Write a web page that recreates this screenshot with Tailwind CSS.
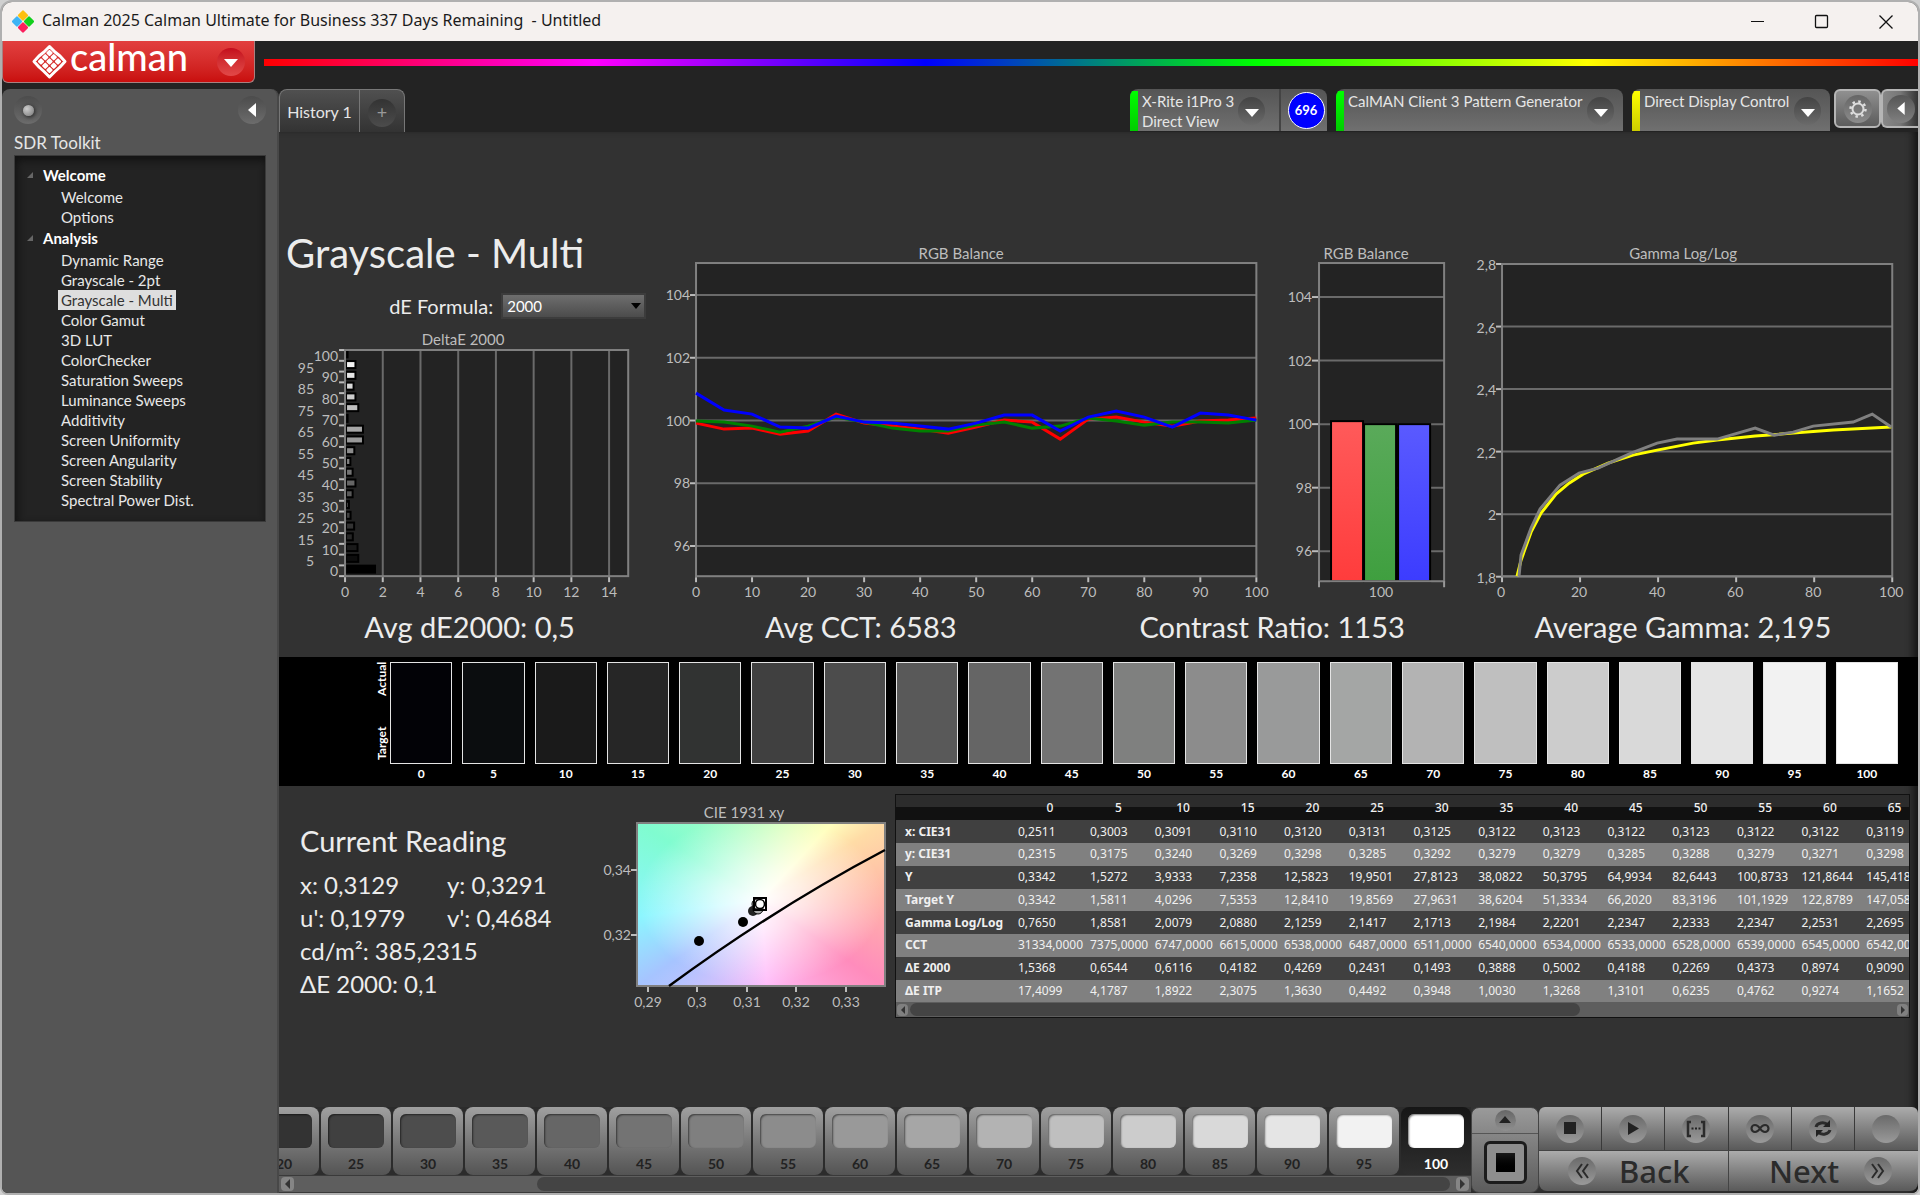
<!DOCTYPE html>
<html lang="en">

<head>
    <meta charset="UTF-8">
    <meta name="viewport" content="width=device-width, initial-scale=1.0">
    <title>Calman 2025 Calman Ultimate for Business</title>
    <script src="https://cdn.jsdelivr.net/npm/@tailwindcss/browser@4"></script>
</head>

<body class="bg-[#d0d0d0] font-['Lato',sans-serif]">
    <div class="h-screen flex flex-col overflow-hidden rounded-t-xl rounded-b-lg border-2 border-[#b0b0b0] bg-[#232323]">

        <!-- title bar -->
        <header class="h-[39px] shrink-0 flex items-center bg-[#f5f1ef] pl-[9px] text-[#1b1b1b] font-['Noto_Sans',sans-serif]">
            <svg class="w-[24px] h-[24px]" viewBox="0 0 24 24">
                <rect x="8" y="1.500" width="8" height="8" rx="1.500" transform="rotate(45 12 5.500)" fill="#fdc010" />
                <rect x="2" y="7.500" width="8" height="8" rx="1.500" transform="rotate(45 6 11.500)" fill="#3fb4f5" />
                <rect x="14" y="7.500" width="8" height="8" rx="1.500" transform="rotate(45 18 11.500)" fill="#12cf1c" />
                <rect x="8" y="13.500" width="8" height="8" rx="1.500" transform="rotate(45 12 17.500)" fill="#fb1f5d" />
            </svg>
            <h2 class="ml-[7px] text-[16px] leading-[36px] h-full whitespace-pre">Calman 2025 Calman Ultimate for Business 337 Days Remaining  - Untitled</h2>
            <div class="ml-auto h-full flex text-[#111]">
                <button class="w-[64px] grid place-items-center" aria-label="Minimize"><svg class="w-4 h-4" viewBox="0 0 16 16"><path d="M1 7.500h13" stroke="currentColor" /></svg></button>
                <button class="w-[64px] grid place-items-center" aria-label="Maximize"><svg class="w-4 h-4" viewBox="0 0 16 16"><rect x="1.500" y="1.500" width="12" height="12" rx="1" fill="none" stroke="currentColor" stroke-width="1.300" /></svg></button>
                <button class="w-[64px] grid place-items-center" aria-label="Close"><svg class="w-4 h-4" viewBox="0 0 16 16"><path d="M1.500 1.500l13 13M14.500 1.500l-13 13" stroke="currentColor" stroke-width="1.300" /></svg></button>
            </div>
        </header>

        <!-- logo and rainbow strip -->
        <div class="h-[48px] shrink-0 flex items-start">
            <button class="w-[253px] h-[42px] flex items-center rounded-b-md border border-t-0 border-[#a98080] bg-linear-to-b from-[#e23f3f] to-[#c90d0d] text-white" aria-label="Calman menu">
                <svg class="w-[214px] h-[42px] overflow-visible" viewBox="0 0 214 42">
                    <path d="M41 11l5.500-5.500 5.500 5.500M57 15l5 5.500-5 5.500M52 30.500l-5.500 5.500-5.500-5.500M36 26l-5-5.500 5-5.500M41 11l-5 4M52 11l5 4M57 26l-5 4.500M36 26l5 4.500" fill="none" stroke="#fff" stroke-width="3" stroke-linejoin="round" stroke-linecap="round" />
                    <g fill="#fff" transform="rotate(45 46.500 20.500)">
                        <rect x="38" y="12" width="5" height="5" rx="1" />
                        <rect x="44" y="12" width="5" height="5" rx="1" />
                        <rect x="50" y="12" width="5" height="5" rx="1" />
                        <rect x="38" y="18" width="5" height="5" rx="1" />
                        <rect x="44" y="18" width="5" height="5" rx="1" />
                        <rect x="50" y="18" width="5" height="5" rx="1" />
                        <rect x="38" y="24" width="5" height="5" rx="1" />
                        <rect x="44" y="24" width="5" height="5" rx="1" />
                        <rect x="50" y="24" width="5" height="5" rx="1" />
                    </g>
                    <text x="67" y="30" fill="#fff" font-size="38" font-weight="500">calman</text>
                </svg>
                <span class="w-[28px] h-[28px] rounded-full grid place-items-center bg-linear-to-b from-[#c40a1c] to-[#e24848]">
                    <svg class="w-[14px] h-[8px] mt-[3px]" viewBox="0 0 14 8"><path d="M0 0h14L7 8z" fill="#fff" /></svg>
                </span>
            </button>
            <div class="flex-1 ml-[9px] mt-[18px] h-[7px] bg-[linear-gradient(to_right,#f00_0%,#f0f_20%,#00f_40%,#0f0_60%,#ff0_80%,#f00_100%)]"></div>
        </div>

        <div class="flex-1 min-h-0 flex">

            <!-- sidebar -->
            <aside class="w-[277px] shrink-0 rounded-t-lg bg-[#555] border-r-2 border-[#484848] pl-[12px] pr-[11px]">
                <div class="h-[42px] flex items-center justify-between">
                    <button class="w-[28px] h-[28px] rounded-full grid place-items-center bg-linear-to-b from-[#4c4c4c] to-[#6c6c6c]" aria-label="Pin">
                        <span class="w-[11px] h-[11px] rounded-full bg-radial-[at_35%_35%] from-[#ccc] to-[#777] shadow-[1px_1px_4px_#222]"></span>
                    </button>
                    <button class="w-[28px] h-[28px] rounded-full grid place-items-center bg-linear-to-b from-[#4c4c4c] to-[#6c6c6c]" aria-label="Collapse">
                        <svg class="w-[8px] h-[14px]" viewBox="0 0 8 14"><path d="M8 0v14L0 7z" fill="#fff" /></svg>
                    </button>
                </div>
                <h3 class="h-[24px] text-[17px] leading-[24px] text-[#e6e6e6]">SDR Toolkit</h3>
                <nav class="h-[367px] border border-[#3a3a3a] bg-[#232323] shadow-[inset_2px_4px_8px_#111] pt-[8px] text-[15px] text-[#e8e8e8]">
                    <h4 class="flex items-center gap-4 pl-[12px] h-[22px] font-bold text-white"><svg class="w-[6px] h-[6px] -mr-[6px]" viewBox="0 0 6 6"><path d="M6 0v6H0z" fill="#666" /></svg>Welcome</h4>
                    <ul class="pl-[43px] pt-[1px]">
                        <li class="h-[20px] leading-[20px]"><a class="px-[3px]" href="#">Welcome</a></li>
                        <li class="h-[20px] leading-[20px]"><a class="px-[3px]" href="#">Options</a></li>
                    </ul>
                    <h4 class="flex items-center gap-4 pl-[12px] h-[22px] font-bold text-white"><svg class="w-[6px] h-[6px] -mr-[6px]" viewBox="0 0 6 6"><path d="M6 0v6H0z" fill="#666" /></svg>Analysis</h4>
                    <ul class="pl-[43px] pt-[1px]" id="analysis"></ul>
                </nav>
            </aside>

            <!-- workspace -->
            <main class="flex-1 min-w-0 flex flex-col">
                <div class="h-[43px] shrink-0 flex items-stretch text-[#e6e6e6]">
                    <div class="w-[126px] flex rounded-t-lg border border-b-0 border-[#777] bg-linear-to-b from-[#505050] to-[#333]">
                        <button class="w-[80px] border-r border-[#777] text-[16px] pt-[2px]">History 1</button>
                        <button class="flex-1 grid place-items-center pt-[4px]" aria-label="Add history"><span class="w-[28px] h-[28px] rounded-full bg-linear-to-b from-[#333] to-[#4c4c4c] text-[#999] text-[18px] leading-[27px]">+</span></button>
                    </div>

                    <div class="ml-auto w-[197px] mb-[1px] flex overflow-hidden rounded-t-lg bg-linear-to-b from-[#555] to-[#707070] text-[15px] leading-[20px]">
                        <span class="w-[8px] mt-[2px] bg-linear-to-b from-[#0f0] to-[#0c0]"></span>
                        <p class="w-[100px] pl-[4px] pt-[2px] whitespace-nowrap">X-Rite i1Pro 3<br>Direct View</p>
                        <button class="w-[27px] h-[28px] mt-[8px] rounded-full grid place-items-center bg-linear-to-b from-[#444] to-[#6a6a6a]" aria-label="Meter options"><svg class="w-[14px] h-[8px] mt-[4px]" viewBox="0 0 14 8"><path d="M0 0h14L7 8z" fill="#fff" /></svg></button>
                        <span class="ml-auto w-[48px] pl-[4px] border-l-2 border-[#444] grid place-items-center"><span class="w-[37px] h-[37px] rounded-full border-[1px] border-white bg-[#00f] grid place-items-center text-[13px] font-bold text-white">696</span></span>
                    </div>
                    <div class="ml-[9px] w-[287px] mb-[1px] flex overflow-hidden rounded-t-lg bg-linear-to-b from-[#555] to-[#707070] text-[15px] leading-[20px]">
                        <span class="w-[8px] mt-[2px] bg-linear-to-b from-[#0f0] to-[#0c0]"></span>
                        <p class="flex-1 pl-[4px] pt-[2px] whitespace-nowrap">CalMAN Client 3 Pattern Generator</p>
                        <button class="w-[27px] h-[28px] mt-[8px] mr-[9px] rounded-full grid place-items-center bg-linear-to-b from-[#444] to-[#6a6a6a]" aria-label="Source options"><svg class="w-[14px] h-[8px] mt-[4px]" viewBox="0 0 14 8"><path d="M0 0h14L7 8z" fill="#fff" /></svg></button>
                    </div>
                    <div class="ml-[9px] w-[198px] mb-[1px] flex overflow-hidden rounded-t-lg bg-linear-to-b from-[#555] to-[#707070] text-[15px] leading-[20px]">
                        <span class="w-[8px] mt-[2px] bg-linear-to-b from-[#ff0] to-[#cc0]"></span>
                        <p class="flex-1 pl-[4px] pt-[2px] whitespace-nowrap">Direct Display Control</p>
                        <button class="w-[27px] h-[28px] mt-[8px] mr-[9px] rounded-full grid place-items-center bg-linear-to-b from-[#444] to-[#6a6a6a]" aria-label="Display options"><svg class="w-[14px] h-[8px] mt-[4px]" viewBox="0 0 14 8"><path d="M0 0h14L7 8z" fill="#fff" /></svg></button>
                    </div>
                    <button class="ml-[4px] w-[47px] h-[39px] rounded-md border-2 border-[#b5b5b5] grid place-items-center bg-linear-to-b from-[#909090] to-[#5c5c5c]" aria-label="Settings">
                        <span class="w-[28px] h-[28px] rounded-full grid place-items-center bg-linear-to-b from-[#666] to-[#8c8c8c]">
                            <svg class="w-[20px] h-[20px]" viewBox="0 0 20 20" fill="none" stroke="#ddd"><circle cx="10" cy="10" r="5.500" stroke-width="2" /><circle cx="10" cy="10" r="7.500" stroke-width="2.500" stroke-dasharray="2.500 3.390" /></svg>
                        </span>
                    </button>
                    <button class="w-[37px] h-[39px] rounded-l-md border-2 border-r-0 border-[#b5b5b5] grid place-items-center bg-linear-to-r from-[#888] via-[#777] to-[#333]" aria-label="Collapse toolbar">
                        <span class="w-[28px] h-[28px] rounded-full grid place-items-center bg-linear-to-b from-[#555] to-[#808080]"><svg class="w-[8px] h-[13px]" viewBox="0 0 8 14"><path d="M8 0v14L0 7z" fill="#fff" /></svg></span>
                    </button>
                </div>

                <section class="flex-1 min-h-0 flex flex-col bg-[#323232] shadow-[inset_-8px_0_8px_-4px_#111] text-[#ececec] pt-[98px]">

                    <!-- charts -->
                    <div class="grid grid-cols-[381fr_616fr_184fr_457fr] items-end">
                        <div>
                            <h1 class="pl-[7px] text-[40px] leading-[46px] whitespace-nowrap">Grayscale - Multi</h1>
                            <div class="flex items-center justify-end h-[48px] pt-[12px] pr-[14px] gap-[8px]">
                                <label for="formula" class="text-[20px]">dE Formula:</label>
                                <div class="relative">
                                    <select id="formula" class="appearance-none w-[145px] h-[26px] border-2 border-[#3c3c3c] bg-linear-to-b from-[#6e6e6e] to-[#4c4c4c] pl-[4px] text-[15px] leading-[22px] text-white">
                                        <option>2000</option>
                                        <option>94</option>
                                        <option>ITP</option>
                                    </select>
                                    <svg class="absolute right-[5px] top-[10px] w-[10px] h-[6px]" viewBox="0 0 10 6"><path d="M0 0h10L5 6z" fill="#000" /></svg>
                                </div>
                            </div>
                            <svg id="deltaE" class="w-full" viewBox="279 324 381 281" font-size="14"></svg>
                        </div>
                        <svg id="rgbLine" class="w-full" viewBox="660 230 616 375" font-size="14"></svg>
                        <svg id="rgbBars" class="w-full" viewBox="1276 230 184 375" font-size="14"></svg>
                        <svg id="gamma" class="w-full" viewBox="1460 230 457 375" font-size="14"></svg>
                    </div>

                    <!-- averages -->
                    <div class="h-[52px] shrink-0 grid grid-cols-[381fr_401fr_421fr_400fr_35fr] text-center text-[29px] leading-[44px] whitespace-nowrap">
                        <p>Avg dE2000: 0,5</p>
                        <p>Avg CCT: 6583</p>
                        <p>Contrast Ratio: 1153</p>
                        <p>Average Gamma: 2,195</p>
                    </div>

                    <!-- actual / target strip -->
                    <div class="h-[129px] shrink-0 flex bg-black pl-[94px] pr-[20px] pt-[5px] text-[12px] font-bold text-white">
                        <div class="w-[17px] h-[98px] flex flex-row-reverse justify-between items-center [writing-mode:vertical-rl] rotate-180">
                            <span>Actual</span><span>Target</span>
                        </div>
                        <div id="swatches" class="flex-1 grid grid-cols-21 gap-[10px]"></div>
                    </div>

                    <!-- reading, CIE plot, data -->
                    <div class="flex-1 min-h-0 flex items-start pt-[8px]">
                        <div class="w-[321px] shrink-0 pl-[21px] pt-[28px]">
                            <h2 class="text-[29px] leading-[38px] mb-[8px]">Current Reading</h2>
                            <div class="grid grid-cols-[147px_1fr] text-[24px] leading-[33px] whitespace-nowrap">
                                <p>x: 0,3129</p>
                                <p>y: 0,3291</p>
                                <p>u': 0,1979</p>
                                <p>v': 0,4684</p>
                                <p class="col-span-2">cd/m²: 385,2315</p>
                                <p class="col-span-2">ΔE 2000: 0,1</p>
                            </div>
                        </div>
                        <svg id="cie" class="w-[295px] shrink-0" viewBox="600 794 295 226" font-size="14"></svg>
                        <div class="flex-1 min-w-0 mr-[8px] border border-[#111] bg-[#5e5e5e] overflow-hidden font-['Noto_Sans',sans-serif] text-[12px] text-[#f0f0f0]">
                            <table class="w-[1031px] h-[207px] table-fixed whitespace-nowrap">
                                <thead>
                                    <tr id="levels" class="h-[25px] bg-[linear-gradient(#2c2c2c_50%,#111_50%)]"></tr>
                                </thead>
                                <tbody id="readings"></tbody>
                            </table>
                            <div class="h-[15px] flex items-center justify-between px-[1px]">
                                <button class="w-[11px] h-[12px] rounded-sm bg-[#808080] grid place-items-center" aria-label="Scroll left"><svg class="w-[4px] h-[8px]" viewBox="0 0 4 8"><path d="M4 0v8L0 4z" fill="#333" /></svg></button>
                                <div class="flex-1 px-[2px]"><div class="w-[68%] h-[13px] rounded-full bg-[#444]"></div></div>
                                <button class="w-[11px] h-[12px] rounded-sm bg-[#808080] grid place-items-center" aria-label="Scroll right"><svg class="w-[4px] h-[8px]" viewBox="0 0 4 8"><path d="M0 0v8l4-4z" fill="#333" /></svg></button>
                            </div>
                        </div>
                    </div>

                    <!-- pattern buttons and transport -->
                    <footer class="h-[86px] shrink-0 flex">
                        <div class="flex-1 min-w-0 flex flex-col overflow-hidden bg-[#2c2c2c]">
                            <div id="patterns" class="h-[68px] flex justify-end gap-[2px]"></div>
                            <div class="h-[18px] flex items-center px-[2px] border-y border-[#3a3a3a] bg-[#5e5e5e]">
                                <button class="w-[13px] h-[14px] rounded-sm bg-[#858585] grid place-items-center" aria-label="Scroll left"><svg class="w-[5px] h-[10px]" viewBox="0 0 4 8"><path d="M4 0v8L0 4z" fill="#333" /></svg></button>
                                <div class="flex-1 flex justify-end pr-[6px]"><div class="w-[79%] h-[14px] rounded-full bg-[#444]"></div></div>
                                <button class="w-[13px] h-[14px] rounded-sm bg-[#858585] grid place-items-center" aria-label="Scroll right"><svg class="w-[5px] h-[10px]" viewBox="0 0 4 8"><path d="M0 0v8l4-4z" fill="#333" /></svg></button>
                            </div>
                        </div>
                        <div class="w-[68px] flex flex-col rounded-lg border border-[#444] bg-linear-to-b from-[#9a9a9a] to-[#5c5c5c]">
                            <button class="h-[26px] border-b border-[#555] grid place-items-center" aria-label="More"><span class="w-[21px] h-[21px] rounded-full grid place-items-center bg-linear-to-b from-[#666] to-[#909090]"><svg class="w-[12px] h-[7px] mb-[2px]" viewBox="0 0 12 7"><path d="M0 7h12L6 0z" fill="#222" /></svg></span></button>
                            <button class="flex-1 grid place-items-center pb-[2px]" aria-label="Pattern window"><span class="w-[43px] h-[43px] rounded-md border-[3px] border-[#1c1c1c] bg-[#8e8e8e] grid place-items-center"><span class="w-[19px] h-[19px] bg-linear-to-b from-[#1a1a1a] to-black"></span></span></button>
                        </div>
                        <div class="w-[379px] flex flex-col text-[#2b2b2b] pb-[2px]">
                            <div id="transport" class="h-[43px] grid grid-cols-6 divide-x divide-[#3a3a3a] bg-linear-to-b from-[#acacac] to-[#5a5a5a] rounded-t-md"></div>
                            <div class="flex-1 grid grid-cols-2 divide-x divide-[#444] border-t border-[#444] bg-linear-to-b from-[#acacac] to-[#5a5a5a] rounded-b-lg font-['Noto_Sans',sans-serif] text-[31px] leading-[38px] font-medium">
                                <button class="flex items-center pl-[29px] gap-[23px]"><span class="w-[28px] h-[28px] rounded-full grid place-items-center bg-linear-to-b from-[#6a6a6a] to-[#9a9a9a]"><svg class="w-[14px] h-[16px]" viewBox="0 0 14 16" fill="none" stroke="#2b2b2b" stroke-width="2"><path d="M7 1L2 8l5 7M13 1L8 8l5 7" /></svg></span>Back</button>
                                <button class="flex items-center justify-end pr-[26px] gap-[25px]">Next<span class="w-[28px] h-[28px] rounded-full grid place-items-center bg-linear-to-b from-[#6a6a6a] to-[#9a9a9a]"><svg class="w-[14px] h-[16px]" viewBox="0 0 14 16" fill="none" stroke="#2b2b2b" stroke-width="2"><path d="M1 1l5 7-5 7M7 1l5 7-5 7" /></svg></span></button>
                            </div>
                        </div>
                    </footer>
                </section>
            </main>
        </div>
    </div>

    <script>
        const byId = (id) => document.getElementById(id);

        // sidebar pages
        const pages = ['Dynamic Range', 'Grayscale - 2pt', 'Grayscale - Multi', 'Color Gamut', '3D LUT', 'ColorChecker', 'Saturation Sweeps',
            'Luminance Sweeps', 'Additivity', 'Screen Uniformity', 'Screen Angularity', 'Screen Stability', 'Spectral Power Dist.'];
        for (const page of pages) {
            const active = page == 'Grayscale - Multi' ? 'inline-block px-[3px] bg-[#dedede] text-[#333]' : 'px-[3px]';
            byId('analysis').innerHTML += `<li class="h-[20px] leading-[20px]"><a class="${active}" href="#">${page}</a></li>`;
        }

        // svg helpers
        const line = (x1, y1, x2, y2, color = '#6a6a6a', w = 2) => `<path d="M${x1} ${y1}L${x2} ${y2}" stroke="${color}" stroke-width="${w}"/>`;
        const label = (x, y, text, anchor = 'middle') => `<text x="${x}" y="${y}" text-anchor="${anchor}" fill="#bdbdbd">${text}</text>`;
        const heading = (x, y, text) => `<text x="${x}" y="${y}" font-size="15" text-anchor="middle" fill="#bdbdbd">${text}</text>`;
        const frame = (x, y, w, h) => `<rect x="${x}" y="${y}" width="${w}" height="${h}" fill="none" stroke="#808080" stroke-width="2"/>`;
        const plot = (x, y, w, h) => `<rect x="${x}" y="${y}" width="${w}" height="${h}" fill="#232323"/>`;
        const curve = (xs, ys, color) => `<polyline points="${xs.map((x, i) => x + ',' + ys[i]).join(' ')}" fill="none" stroke="${color}" stroke-width="3"/>`;

        // DeltaE bars
        const dE = [1.54, 0.65, 0.61, 0.36, 0.43, 0.24, 0.15, 0.35, 0.5, 0.35, 0.23, 0.44, 0.9, 0.9, 0.08, 0.65, 0.5, 0.4, 0.5, 0.5, 0.08];
        let out = heading(463, 345, 'DeltaE 2000') + plot(345, 350, 283, 226);
        for (let i = 0; i <= 7; i++) {
            const x = 345 + i * 37.7;
            if (i) out += line(x, 350, x, 576);
            out += line(x, 577, x, 582, '#bbb') + label(x, 597, i * 2);
        }
        for (let i = 0; i <= 21; i++) out += line(339, 576 - i * 10.76, 345, 576 - i * 10.76, '#bbb');
        dE.forEach((v, i) => {
            const y = 569 - i * 10.76, g = Math.round(i * 12.75);
            out += `<rect x="346" y="${y - 3.5}" width="${v * 18.8}" height="7" fill="rgb(${g},${g},${g})" stroke="#000" stroke-width="2"/>`;
            out += i % 2 ? label(314, y + 8, i * 5, 'end') : label(338, y + 7, i * 5, 'end');
        });
        byId('deltaE').innerHTML = out + frame(345, 350, 283, 226);

        // RGB balance over stimulus
        out = heading(961, 259, 'RGB Balance') + plot(696, 263, 560, 313);
        [104, 102, 100, 98, 96].forEach((v, i) => {
            const y = 295 + i * 62.7;
            out += line(696, y, 1256, y) + line(690, y, 696, y, '#bbb') + label(690, y + 5, v, 'end');
        });
        for (let i = 0; i <= 10; i++) out += line(696 + i * 56, 577, 696 + i * 56, 582, '#bbb') + label(696 + i * 56, 597, i * 10);
        out += frame(696, 263, 560, 313);
        const xs = Array.from({ length: 21 }, (_, i) => 696 + i * 28);
        out += curve(xs, [423, 429, 428, 434, 431, 414, 423, 426, 429, 433, 427, 420, 422, 439, 419, 417, 422, 426, 421, 420, 418], '#f00');
        out += curve(xs, [421, 422, 426, 432, 426, 417, 422, 428, 431, 431, 425, 422, 428, 426, 418, 421, 425, 422, 422, 423, 420], '#008000');
        out += curve(xs, [393, 410, 414, 427, 428, 416, 422, 423, 426, 429, 423, 415, 415, 431, 417, 411, 417, 427, 413, 415, 420], '#00f');
        byId('rgbLine').innerHTML = out;

        // RGB balance bars for the current level
        out = `<defs><linearGradient id="r" x2="0" y2="1"><stop stop-color="#ff5a5a"/><stop offset="1" stop-color="#ff3c3c"/></linearGradient>
            <linearGradient id="g" x2="0" y2="1"><stop stop-color="#5aaa5a"/><stop offset="1" stop-color="#3f9f3f"/></linearGradient>
            <linearGradient id="b" x2="0" y2="1"><stop stop-color="#5a5aff"/><stop offset="1" stop-color="#3c3cff"/></linearGradient></defs>`;
        out += heading(1365, 259, 'RGB Balance') + plot(1318, 263, 125, 318);
        [104, 102, 100, 98, 96].forEach((v, i) => {
            const y = 297 + i * 63.5;
            out += line(1318, y, 1443, y) + line(1311, y, 1318, y, '#bbb') + label(1311, y + 5, v, 'end');
        });
        [['r', 1330, 421], ['g', 1363, 424], ['b', 1397, 424]].forEach(([id, x, y]) => {
            out += `<rect x="${x}" y="${y}" width="32" height="${581 - y}" fill="url(#${id})" stroke="#000" stroke-width="2"/>`;
        });
        out += frame(1318, 263, 125, 318) + line(1318, 581, 1318, 587, '#999') + line(1443, 581, 1443, 587, '#999') + label(1380, 597, 100);
        byId('rgbBars').innerHTML = out;

        // gamma curve
        out = heading(1682, 259, 'Gamma Log/Log') + plot(1501, 264, 390, 312);
        ['2,8', '2,6', '2,4', '2,2', '2', '1,8'].forEach((v, i) => {
            const y = 264 + i * 62.5;
            out += line(1501, y, 1891, y) + line(1495, y, 1501, y, '#bbb') + label(1495, y + 6, v, 'end');
        });
        for (let i = 0; i <= 5; i++) out += line(1501 + i * 78, 577, 1501 + i * 78, 582, '#bbb') + label(1500 + i * 78, 597, i * 20);
        out += frame(1501, 264, 390, 312);
        out += curve([1516, 1520, 1530, 1540, 1555, 1568, 1582, 1607, 1632, 1656, 1692, 1716, 1754, 1792, 1832, 1890],
            [576, 560, 532, 513, 494, 483, 474, 463, 455, 450, 443, 440, 436, 433, 430, 427], '#ff0');
        out += curve([1518, 1520, 1530, 1539, 1559, 1578, 1597, 1630, 1656, 1676, 1716, 1754, 1773, 1792, 1812, 1852, 1871, 1890],
            [576, 555, 528, 509, 485, 473, 468, 453, 443, 439, 439, 428, 435, 432, 426, 422, 414, 427], '#808080');
        byId('gamma').innerHTML = out;

        // CIE 1931 xy close-up
        out = heading(744, 818, 'CIE 1931 xy');
        out += `<foreignObject x="637" y="823" width="248" height="163"><div class="w-full h-full bg-[radial-gradient(ellipse_at_50%_47%,#fff_0%,#ffffffb0_25%,#ffffff00_70%),conic-gradient(from_0deg_at_50%_47%,#c4ffc0_0deg,#ffffbe_43deg,#ffdca6_58deg,#ffb4a8_90deg,#ff8cbc_125deg,#ffbefa_176deg,#a6c4ff_235deg,#8cf6ff_262deg,#80fcd0_302deg,#c4ffc0_360deg)]"></div></foreignObject>`;
        out += frame(637, 823, 248, 163);
        [['0,34', 870], ['0,32', 935]].forEach(([v, y]) => out += line(631, y, 637, y, '#bbb') + label(631, y + 5, v, 'end'));
        [['0,29', 648], ['0,3', 697], ['0,31', 747], ['0,32', 796], ['0,33', 846]].forEach(([v, x]) => out += line(x, 987, x, 992, '#bbb') + label(x, 1007, v));
        out += '<path d="M669 986Q775 908 885 850" fill="none" stroke="#000" stroke-width="2.500"/>';
        out += '<circle cx="699" cy="941" r="5"/><circle cx="743" cy="922" r="5"/><circle cx="753" cy="911" r="5" fill="#222"/>';
        out += '<g fill="#aaa" stroke="#000"><circle cx="758" cy="909" r="5"/><circle cx="757" cy="904" r="5" fill="#ccc"/></g>';
        out += '<rect x="754" y="898" width="12" height="12" fill="none" stroke="#000" stroke-width="2"/><circle cx="760" cy="904" r="4.500" fill="#fff" stroke="#000" stroke-width="1.500"/>';
        byId('cie').innerHTML = out;

        // swatches, one per stimulus level
        const actual = ['#020206', '#0b0d0f', '#1a1a1a', '#262626', '#313332', '#404040', '#4c4c4c', '#595959', '#656565', '#737373', '#7f807f',
            '#8c8c8c', '#999a9a', '#a4a6a5', '#b3b3b3', '#bfbfbf', '#cccccc', '#d9d9d9', '#e5e5e5', '#f2f2f2', '#ffffff'];
        actual.forEach((color, i) => {
            byId('swatches').innerHTML += `<div class="text-center leading-[20px]"><div class="h-[102px] border border-[#e4e4e4]" style="background:${color}"></div>${i * 5}</div>`;
        });

        // data grid
        const rows = {
            'x: CIE31': '0,2511 0,3003 0,3091 0,3110 0,3120 0,3131 0,3125 0,3122 0,3123 0,3122 0,3123 0,3122 0,3122 0,3119',
            'y: CIE31': '0,2315 0,3175 0,3240 0,3269 0,3298 0,3285 0,3292 0,3279 0,3279 0,3285 0,3288 0,3279 0,3271 0,3298',
            'Y': '0,3342 1,5272 3,9333 7,2358 12,5823 19,9501 27,8123 38,0822 50,3795 64,9934 82,6443 100,8733 121,8644 145,418',
            'Target Y': '0,3342 1,5811 4,0296 7,5353 12,8410 19,8569 27,9631 38,6204 51,3334 66,2020 83,3196 101,1929 122,8789 147,058',
            'Gamma Log/Log': '0,7650 1,8581 2,0079 2,0880 2,1259 2,1417 2,1713 2,1984 2,2201 2,2347 2,2333 2,2347 2,2531 2,2695',
            'CCT': '31334,0000 7375,0000 6747,0000 6615,0000 6538,0000 6487,0000 6511,0000 6540,0000 6534,0000 6533,0000 6528,0000 6539,0000 6545,0000 6542,00',
            'ΔE 2000': '1,5368 0,6544 0,6116 0,4182 0,4269 0,2431 0,1493 0,3888 0,5002 0,4188 0,2269 0,4373 0,8974 0,9090',
            'ΔE ITP': '17,4099 4,1787 1,8922 2,3075 1,3630 0,4492 0,3948 1,0030 1,3268 1,3101 0,6235 0,4762 0,9274 1,1652'
        };
        byId('levels').innerHTML = '<th class="w-[118px]"></th>' + Array.from({ length: 14 }, (_, i) =>
            `<th class="font-medium ${i ? '' : 'w-[72px]'}">${i * 5}</th>`).join('');
        for (const name in rows) {
            const cells = rows[name].split(' ').map((v) => `<td class="pl-[4px]">${v}</td>`).join('');
            byId('readings').innerHTML += `<tr class="odd:bg-[#404040] even:bg-[#808080]"><th class="pl-[9px] text-left font-bold">${name}</th>${cells}</tr>`;
        }

        // pattern buttons
        for (let v = 20; v <= 100; v += 5) {
            const g = Math.round(v * 2.55);
            const look = v == 100 ? 'from-[#161616] to-[#2e2e2e] text-white' : 'from-[#a0a0a0] to-[#545454] text-[#222]';
            byId('patterns').innerHTML += `<button class="w-[70px] shrink-0 rounded-lg bg-linear-to-b ${look} flex flex-col items-center pt-[7px] text-[14px] leading-[32px] font-bold">
                <span class="w-[56px] h-[34px] shrink-0 rounded-md shadow-[inset_1px_1px_2px_#0008]" style="background-color:rgb(${g},${g},${g})"></span>${v}</button>`;
        }

        // transport buttons
        const icons = [
            ['Stop', '<path d="M5 4h12v12H5z"/>'],
            ['Play', '<path d="M6 4v13l11-6.500z"/>'],
            ['Read series', '<path d="M6 4H3v14h3M16 4h3v14h-3" fill="none" stroke="#2b2b2b" stroke-width="2.500"/><path d="M6.500 9.500h2v2h-2zM10 9.500h2v2h-2zM13.500 9.500h2v2h-2z"/>'],
            ['Continuous', '<path d="M11 10.500C9 7.500 7.500 7 6 7a3.500 3.500 0 0 0 0 7c1.500 0 3-.5 5-3.500S14.500 7 16 7a3.500 3.500 0 0 1 0 7c-1.500 0-3-.5-5-3.500z" fill="none" stroke="#2b2b2b" stroke-width="2.200"/>'],
            ['Refresh', '<path d="M4 9c1-4 8-6 12-2M18 12c-1 4-8 6-12 2" fill="none" stroke="#2b2b2b" stroke-width="3"/><path d="M18 2v7h-7zM4 19v-7h7z"/>'],
            ['Record', '']
        ];
        for (const [name, shape] of icons) {
            byId('transport').innerHTML += `<button class="grid place-items-center" aria-label="${name}"><span class="w-[28px] h-[28px] rounded-full grid place-items-center bg-linear-to-b from-[#6a6a6a] to-[#9a9a9a]">
                <svg class="w-[22px] h-[21px]" viewBox="0 0 22 21" fill="#222">${shape}</svg></span></button>`;
        }
    </script>
</body>

</html>
